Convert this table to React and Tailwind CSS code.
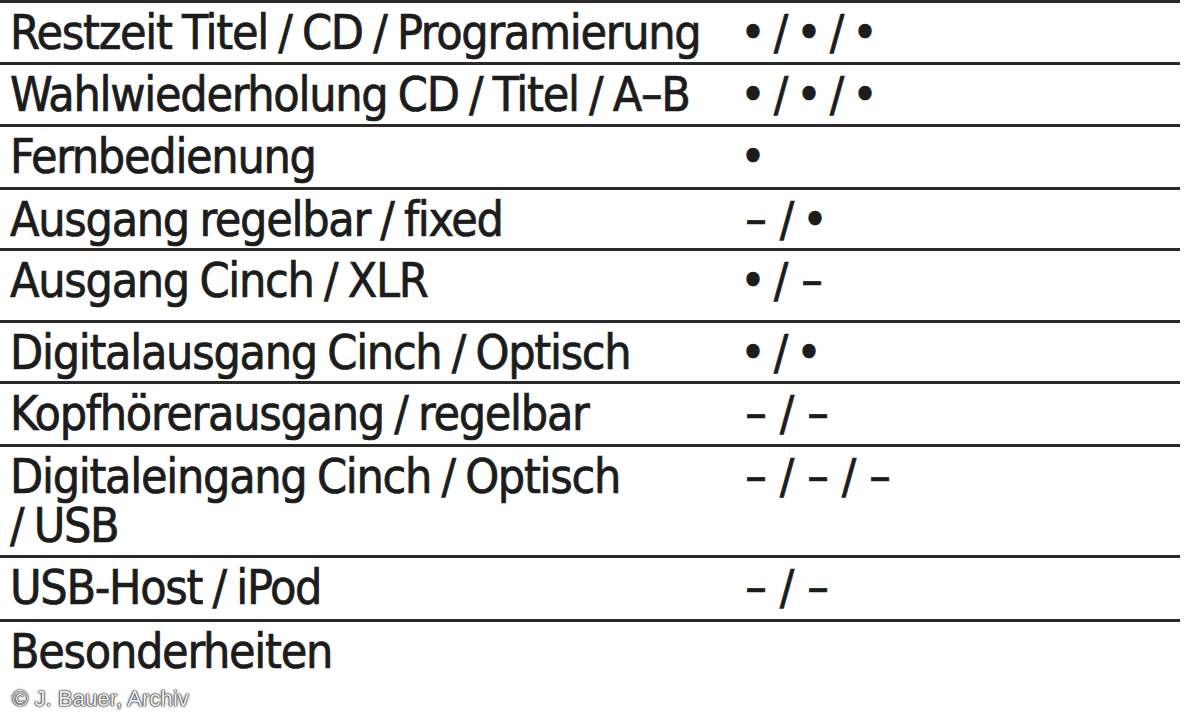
const rows = [
  { label: ["Restzeit Titel / CD / Programierung"], value: "•/•/•", h: "h-[62px]" },
  { label: ["Wahlwiederholung CD / Titel / A–B"], value: "•/•/•", h: "h-[62px]" },
  { label: ["Fernbedienung"], value: "•", h: "h-[63px]" },
  { label: ["Ausgang regelbar / fixed"], value: "–/•", h: "h-[61px]" },
  { label: ["Ausgang Cinch / XLR"], value: "•/–", h: "h-[72px]" },
  { label: ["Digitalausgang Cinch / Optisch"], value: "•/•", h: "h-[61px]" },
  { label: ["Kopfhörerausgang / regelbar"], value: "–/–", h: "h-[63px]" },
  { label: ["Digitaleingang Cinch / Optisch", "/ USB"], value: "–/–/–", h: "h-[111px]" },
  { label: ["USB-Host / iPod"], value: "–/–", h: "h-[64px]" },
  { label: ["Besonderheiten"], value: "", h: "h-[64px]" },
];

const tokenWidth = {
  "•": "w-[26px]",
  "–": "w-[32px]",
  "/": "w-[30px]",
};

function Value({ text }) {
  return (
    <div className="flex">
      {text.split("").map((ch, i) => (
        <span key={i} className={`${tokenWidth[ch]} text-center`}>
          {ch}
        </span>
      ))}
    </div>
  );
}

function Row({ row }) {
  return (
    <div className={`flex border-t-[3px] border-[#2a2a2a] pt-[5px] ${row.h}`}>
      <div className="w-[740px] whitespace-nowrap pl-[10px] tracking-[-1.3px] [word-spacing:-2px]">
        {row.label.map((line) => (
          <div key={line}>{line}</div>
        ))}
      </div>
      <Value text={row.value} />
    </div>
  );
}

export default function App() {
  return (
    <div className="w-[1200px] h-[720px] overflow-hidden bg-white">
      <div
        className="w-[1180px] text-[48px] leading-[49px] text-[#1c1c1c] [font-stretch:condensed] [-webkit-text-stroke:0.7px_#1c1c1c]"
        style={{ fontFamily: '"Liberation Sans Narrow", "DejaVu Sans Condensed", Roboto, sans-serif' }}
      >
        {rows.map((row) => (
          <Row key={row.label[0]} row={row} />
        ))}
      </div>
      <div className="mt-[4px] pl-[12px] font-['Liberation_Sans',sans-serif] text-[22px] leading-[24px] tracking-[0.1px] text-[#f0f0f0] [text-shadow:0_0_1px_#222,0_0_1px_#222,0_0_2px_#444,0_0_3px_#888]">
        © J. Bauer, Archiv
      </div>
    </div>
  );
}
